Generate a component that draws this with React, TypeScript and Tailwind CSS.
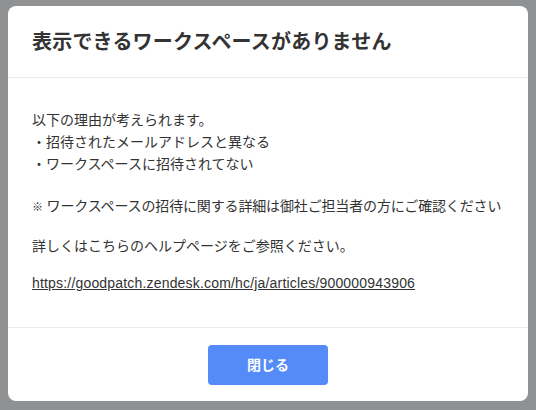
import React from "react";

export default function App() {
  return (
    <div
      className="w-[536px] h-[410px] bg-[#909193] pt-[6px] px-[8px]"
      style={{ fontFamily: '"Liberation Sans", "Noto Sans CJK JP", sans-serif' }}
    >
      <div className="w-[520px] h-[395px] bg-white rounded-[8px] flex flex-col">
        <div className="px-6 pt-[24px] pb-[23px] border-b border-[#e9e9f0]">
          <h1 className="text-[20px] leading-[24px] font-bold text-[#333333] tracking-[0.2px]">
            表示できるワークスペースがありません
          </h1>
        </div>
        <div className="flex-1 px-6 pt-[31px] text-[14px] leading-[22px] text-[#333333]">
          <p>
            以下の理由が考えられます。
            <br />
            ・招待されたメールアドレスと異なる
            <br />
            ・ワークスペースに招待されてない
          </p>
          <p className="mt-[20px] whitespace-nowrap tracking-[-0.15px]">
            <span className="text-[11px]">※</span> ワークスペースの招待に関する詳細は御社ご担当者の方にご確認ください
          </p>
          <p className="mt-[17px]">詳しくはこちらのヘルプページをご参照ください。</p>
          <p className="mt-[15px]">
            <a className="underline text-[#333333] tracking-[0.18px]" href="#">
              https://goodpatch.zendesk.com/hc/ja/articles/900000943906
            </a>
          </p>
        </div>
        <div className="border-t border-[#e9e9f0] flex justify-center pt-[17px] pb-[16px]">
          <button className="w-[120px] h-[40px] rounded-[4px] bg-[#558bf8] text-white text-[14px] font-semibold">
            閉じる
          </button>
        </div>
      </div>
    </div>
  );
}
